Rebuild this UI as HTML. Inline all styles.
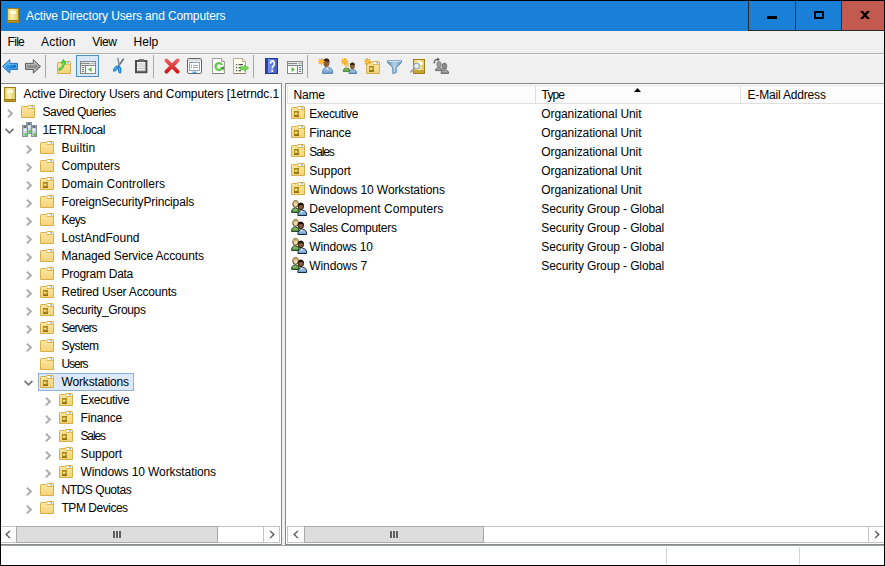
<!DOCTYPE html>
<html><head><meta charset="utf-8"><title>Active Directory Users and Computers</title>
<style>
html,body{margin:0;padding:0;}
body{width:885px;height:566px;position:relative;overflow:hidden;background:#fff;font-family:"Liberation Sans",sans-serif;font-size:12px;color:#000;}
div,span,svg{position:absolute;}
.t{white-space:pre;}
.i{overflow:visible;}
.sep{width:1px;background:#a8a8a8;top:55px;height:23px;}
</style></head><body>


<svg width="0" height="0" style="position:absolute">
<defs>
<linearGradient id="gBook" x1="0" x2="1" y1="0" y2="0"><stop offset="0" stop-color="#e6cf62"/><stop offset=".45" stop-color="#f8efb4"/><stop offset="1" stop-color="#dfc452"/></linearGradient>
<linearGradient id="gFold" x1="0" x2="0" y1="0" y2="1"><stop offset="0" stop-color="#fbe7a2"/><stop offset="1" stop-color="#f4d47c"/></linearGradient>
<linearGradient id="gSrv" x1="0" x2="1" y1="0" y2="0"><stop offset="0" stop-color="#a4b0bc"/><stop offset=".5" stop-color="#dce4ec"/><stop offset="1" stop-color="#a4b0bc"/></linearGradient>
<linearGradient id="gBack" x1="0" x2=".8" y1="0" y2="1"><stop offset="0" stop-color="#8cd4fc"/><stop offset=".35" stop-color="#44acf0"/><stop offset=".7" stop-color="#0c74d4"/><stop offset="1" stop-color="#2c94e4"/></linearGradient>
<linearGradient id="gFwd" x1="0" x2="0" y1="0" y2="1"><stop offset="0" stop-color="#c4c4c4"/><stop offset=".5" stop-color="#8c8c8c"/><stop offset="1" stop-color="#a8a8a8"/></linearGradient>
<linearGradient id="gRed" gradientUnits="userSpaceOnUse" x1="0" x2="0" y1="0" y2="16"><stop offset="0" stop-color="#f46a6a"/><stop offset="1" stop-color="#c80c0c"/></linearGradient>
<linearGradient id="gHelp" x1="0" x2="1" y1="0" y2="0"><stop offset="0" stop-color="#2040a8"/><stop offset=".2" stop-color="#2848b0"/><stop offset=".24" stop-color="#7890e4"/><stop offset="1" stop-color="#3c54bc"/></linearGradient>
<linearGradient id="gFun" x1="0" x2="1" y1="0" y2="0"><stop offset="0" stop-color="#5c90b8"/><stop offset=".5" stop-color="#b8d4e8"/><stop offset="1" stop-color="#5c90b8"/></linearGradient>
<linearGradient id="gBlue" x1="0" x2="0" y1="0" y2="1"><stop offset="0" stop-color="#b4d0ec"/><stop offset="1" stop-color="#6c9ccc"/></linearGradient>
<linearGradient id="gGreen" x1="0" x2="0" y1="0" y2="1"><stop offset="0" stop-color="#a0d080"/><stop offset="1" stop-color="#4c9838"/></linearGradient>
<linearGradient id="gGray" x1="0" x2="0" y1="0" y2="1"><stop offset="0" stop-color="#c8c8c8"/><stop offset="1" stop-color="#787878"/></linearGradient>







</defs>
</svg>

<div style="left:0;top:0;width:885px;height:566px;background:#000"></div>
<div style="left:1px;top:1px;width:883px;height:564px;background:#f0f0f0"></div>
<div style="left:1px;top:1px;width:883px;height:30px;background:#1a80d7"></div>
<svg class="i" style="left:7px;top:8px" width="12" height="15" viewBox="0 0 12 15"><rect x=".5" y=".5" width="11" height="14" fill="url(#gBook)" stroke="#a47c18"/><rect x="1" y="12" width="10" height="2" fill="#bc981c"/><rect x="1" y="12" width="10" height="1" fill="#9c7c10"/><rect x="3" y="3" width="6" height="3" fill="#fffce4"/></svg>
<span class="t " style="left:26px;top:1px;line-height:31px;letter-spacing:-0.128px;color:#fff;top:1px;">Active Directory Users and Computers</span>
<div style="left:748px;top:1px;width:136px;height:30px;background:#2b2b2b"></div>
<div style="left:749px;top:1px;width:46px;height:29px;background:#1a80d7"></div>
<div style="left:796px;top:1px;width:45px;height:29px;background:#1a80d7"></div>
<div style="left:842px;top:1px;width:42px;height:29px;background:#c35a50"></div>
<div style="left:767px;top:16px;width:10px;height:3px;background:#000"></div>
<div style="left:814px;top:11px;width:6px;height:4px;border:2px solid #000"></div>
<svg class="i" style="left:860px;top:11px" width="10" height="8"><path d="M0 0H3L10 8H7ZM7 0H10L3 8H0Z" fill="#000"/></svg>
<span class="t " style="left:7.5px;top:33px;line-height:18px;letter-spacing:-0.681px;">File</span>
<span class="t " style="left:41px;top:33px;line-height:18px;letter-spacing:0.208px;">Action</span>
<span class="t " style="left:92.3px;top:33px;line-height:18px;letter-spacing:-0.432px;">View</span>
<span class="t " style="left:133.6px;top:33px;line-height:18px;letter-spacing:-0.029px;">Help</span>
<div style="left:1px;top:53px;width:883px;height:1px;background:#b2b2b2"></div>
<div style="left:1px;top:54px;width:883px;height:1px;background:#f9f9fc"></div>
<div class="sep" style="left:45px"></div>
<div class="sep" style="left:153px"></div>
<div class="sep" style="left:253px"></div>
<div class="sep" style="left:307px"></div>
<svg class="i" style="left:2px;top:59px" width="16" height="15"><path d="M.5 7.4L7.8.7V4.4H15.5V10.4H7.8V14.1Z" fill="url(#gBack)" stroke="#2272bc" stroke-linejoin="round"/><path d="M2 7.4L6.8 3V5.4H14.5V9.4H6.8V11.8Z" fill="none" stroke="#fff" stroke-opacity=".3"/></svg>
<svg class="i" style="left:25px;top:59px" width="16" height="15"><path d="M15.6 7.4L8.3.7V4.4H.5V10.4H8.3V14.1Z" fill="url(#gFwd)" stroke="#5a5a5a" stroke-linejoin="round"/><path d="M14.1 7.4L9.3 3V5.4H1.5V9.4H9.3V11.8Z" fill="none" stroke="#fff" stroke-opacity=".3"/></svg>
<svg class="i" style="left:57px;top:58px" width="15" height="16"><g transform="translate(0,3)"><path d="M.5 2.3Q.5 1.5 1.3 1.5H6L7.2.5H12.7Q13.5.5 13.5 1.3V12.5H.5Z" fill="url(#gFold)" stroke="#d6ae4c"/><path d="M6.5 3.5H13" stroke="#dcb85a" fill="none"/><rect x="8" y="1.2" width="4.6" height="1.6" fill="#fff"/><rect x="10.4" y="1.2" width="1.6" height="1.2" fill="#5c9ce8"/></g><path d="M2.6 11.4Q6.4 9.4 6.8 4.6" fill="none" stroke="#44c434" stroke-width="2.6" stroke-linecap="round"/><path d="M3.4 5.4L6.4.8L9.8 5.8Z" fill="#44c434"/><path d="M3.2 10.8Q6 9 6.6 4.4" fill="none" stroke="#8ce878" stroke-width=".9"/></svg>
<div style="left:76px;top:55px;width:21px;height:20px;border:1px solid #4a90c8;background:#d9e7f7"></div>
<svg class="i" style="left:80px;top:61px" width="16" height="13"><rect x=".5" y=".5" width="15" height="12" fill="#fff" stroke="#84888c"/><rect x="1" y="1" width="14" height="3" fill="#e8e8e8"/><path d="M1 2.5H10M11.5 2.5H12.5M13.5 2.5H14.5M1 4.5H15M5.5 4.5V12" stroke="#84888c"/><rect x="1" y="5" width="4" height="7" fill="#ececec"/><path d="M2 6.5H4M2 8.5H4M2 10.5H4" stroke="#7c7c7c"/><path d="M11.5 6L8 8.5L11.5 11Z" fill="#5cbc3c"/></svg>
<svg class="i" style="left:112px;top:58px" width="13" height="16"><path d="M11.7.8L5.6 9.4" stroke="#5c6874" stroke-width="1.5" fill="none"/><path d="M5.9.2L7.4 9" stroke="#8490a0" stroke-width="1.6" fill="none"/><ellipse cx="3.7" cy="10.6" rx="1.1" ry="3" transform="rotate(40 3.7 10.6)" fill="#70ccf4" stroke="#1c84d4" stroke-width="1.4"/><ellipse cx="7.6" cy="11.8" rx="1.1" ry="3.1" transform="rotate(-8 7.6 11.8)" fill="#70ccf4" stroke="#1c84d4" stroke-width="1.4"/></svg>
<svg class="i" style="left:135px;top:58px" width="13" height="16"><rect x="1" y="3" width="10.4" height="11.2" fill="#fff" stroke="#4c4c4c" stroke-width="2"/><rect x="3.6" y="1" width="5.2" height="2.4" fill="#707070"/><path d="M2.4 6H10M2.4 8.2H10M2.4 10.4H10M2.4 12.4H10" stroke="#b4b4b4" stroke-width="1"/></svg>
<svg class="i" style="left:164px;top:58px" width="16" height="16"><path d="M2.4 2.4L13.6 13.6M13.6 2.4L2.4 13.6" stroke="url(#gRed)" stroke-width="3.8" stroke-linecap="round"/></svg>
<svg class="i" style="left:187px;top:58px" width="15" height="16"><rect x=".5" y=".5" width="14" height="15" rx="1.4" fill="#fcfcfc" stroke="#646464"/><rect x="1" y="1" width="13" height="2.4" fill="#dcdcdc"/><rect x="2.5" y="4.5" width="10" height="8" fill="#f8fafc" stroke="#9ca4b0"/><path d="M3 4.5H6" stroke="#7c8490"/><path d="M4 7.5H5M4 9.5H5" stroke="#4c8cc8"/><path d="M6 7.5H11M6 9.5H11" stroke="#a0a8b4"/><rect x="5.5" y="13.6" width="4" height="1.6" fill="#4ca4e4"/></svg>
<svg class="i" style="left:212px;top:58px" width="13" height="16"><path d="M.5.5H9.5L12.5 3.5V15.5H.5Z" fill="#fcfcfc" stroke="#a0a0a0"/><path d="M9.5.5V3.5H12.5" fill="#e8e8e8" stroke="#a0a0a0"/><path d="M.5 15.5H12.5" stroke="#808080"/><path d="M10.1 7.2A3.4 3.4 0 1 0 10 10" fill="none" stroke="#60c848" stroke-width="2.2"/><path d="M8.4 9.4L11.6 12.6L12.2 8.2Z" fill="#38a024"/></svg>
<svg class="i" style="left:233px;top:58px" width="16" height="16"><path d="M.5.5H9.5L12.5 3.5V15.5H.5Z" fill="#fcfae8" stroke="#b4ac94"/><path d="M9.5.5V3.5H12.5" fill="#ece8d0" stroke="#b4ac94"/><path d="M3 6.6H4.2M5.6 6.6H10M3 9.6H4.2M5.6 9.6H8M3 12.6H4.2M5.6 12.6H8" stroke="#505050" stroke-width="1.1"/><path d="M7.4 8.8H11.6V7L15.6 10.1L11.6 13.2V11.4H7.4Z" fill="#78dc58" stroke="#48b030" stroke-width=".7"/><path d="M.5 15.5H12.5" stroke="#8c846c"/></svg>
<svg class="i" style="left:265px;top:58px" width="13" height="16"><rect x="0" y="0" width="13" height="16" fill="url(#gHelp)"/><rect x=".5" y=".5" width="12" height="15" fill="none" stroke="#24388c"/><text transform="translate(7.4,13.6) scale(.62,1)" font-family="Liberation Sans,sans-serif" font-size="16.5" font-weight="bold" fill="#fff" text-anchor="middle">?</text></svg>
<svg class="i" style="left:287px;top:61px" width="16" height="13"><rect x=".5" y=".5" width="15" height="12" fill="#fff" stroke="#84888c"/><rect x="1" y="1" width="14" height="3" fill="#e8e8e8"/><path d="M1 2.5H10M11.5 2.5H12.5M13.5 2.5H14.5M1 4.5H15M10.5 4.5V12" stroke="#84888c"/><path d="M12 6.5H14M12 8.5H14M12 10.5H14" stroke="#5c78a8"/><path d="M4.5 6L8 8.5L4.5 11Z" fill="#5cbc3c"/></svg>
<svg class="i" style="left:318px;top:58px" width="15" height="16"><path d="M4.6 15.4Q4.2 9.4 9.6 9.2Q15 9.4 14.6 15.4Z" fill="url(#gBlue)" stroke="#4470a4" stroke-width=".8"/><ellipse cx="8.4" cy="4.8" rx="3" ry="4.2" fill="#8c5c38"/><path d="M5.4 4.4Q5.4 .4 8.8 .4Q11.6 .6 11.4 4.6Q9 2 5.4 4.4Z" fill="#2c2018"/><path d="M8.6 9.4L9.4 12L10.4 9.4Z" fill="#fff"/><path d="M3.5 0V7M0 3.5H7M1 1L6 6M6 1L1 6" stroke="#f8a820" stroke-width="1.2"/><circle cx="3.5" cy="3.5" r="1.6" fill="#fcc040"/></svg>
<svg class="i" style="left:341px;top:58px" width="16" height="16"><path d="M2.2 13.4Q2.2 10 5.6 9.8Q9 10 9 13.4Z" fill="url(#gGreen)" stroke="#3c7c2c" stroke-width=".8"/><ellipse cx="5.8" cy="6.4" rx="2.3" ry="3.2" fill="#e8cc98"/><path d="M8 15.5Q7.8 11.8 11.8 11.6Q15.8 11.8 15.6 15.5Z" fill="url(#gBlue)" stroke="#4470a4" stroke-width=".8"/><ellipse cx="11.4" cy="8" rx="2.4" ry="3.3" fill="#8c5c38"/><path d="M9 7.6Q9 4.6 11.6 4.6Q14 4.8 13.8 7.6Q12 5.8 9 7.6Z" fill="#2c2018"/><path d="M3.5 0V7M0 3.5H7M1 1L6 6M6 1L1 6" stroke="#f8a820" stroke-width="1.2"/><circle cx="3.5" cy="3.5" r="1.6" fill="#fcc040"/></svg>
<svg class="i" style="left:364px;top:58px" width="16" height="16"><g transform="translate(2,3)"><path d="M.5 2.3Q.5 1.5 1.3 1.5H6L7.2.5H12.7Q13.5.5 13.5 1.3V12.5H.5Z" fill="url(#gFold)" stroke="#d6ae4c"/><path d="M6.5 3.5H13" stroke="#dcb85a" fill="none"/><rect x="8" y="1.2" width="4.6" height="1.6" fill="#fff"/><rect x="10.4" y="1.2" width="1.6" height="1.2" fill="#5c9ce8"/><rect x="3" y="5" width="5" height="6" fill="#bc9824"/><rect x="3" y="5" width="5" height="1.2" fill="#a88414"/><rect x="4" y="6.8" width="2.2" height="1.8" fill="#f4e8a4"/><rect x="3" y="9.4" width="5" height="1.6" fill="#94740c"/></g><path d="M3.5 0V7M0 3.5H7M1 1L6 6M6 1L1 6" stroke="#f8a820" stroke-width="1.2"/><circle cx="3.5" cy="3.5" r="1.6" fill="#fcc040"/></svg>
<svg class="i" style="left:387px;top:60px" width="15" height="14"><path d="M.5.8H14.5V2.4L9.2 7.6V12.6L5.8 13.6V7.6L.5 2.4Z" fill="url(#gFun)" stroke="#4c80ac" stroke-width=".9"/><path d="M1 1.4H14" stroke="#d4e8f8"/></svg>
<svg class="i" style="left:410px;top:59px" width="15" height="15"><rect x="3.5" y=".5" width="11" height="14" fill="url(#gBook)" stroke="#a47c18"/><rect x="4" y="11" width="10" height="3" fill="#c8a634"/><rect x="8" y="3" width="5" height="3" fill="#fffce4"/><path d="M4.6 9L.9 12.8" stroke="#9c9c9c" stroke-width="1.7" stroke-linecap="round"/><circle cx="6.6" cy="7" r="2.8" fill="#e4f2fc" stroke="#94a4b4" stroke-width="1.1"/></svg>
<svg class="i" style="left:433px;top:58px" width="16" height="16"><path d="M2.4 12.6Q2.4 9.6 5.8 9.4Q9.2 9.6 9.2 12.6Z" fill="url(#gGray)" stroke="#606060" stroke-width=".8"/><ellipse cx="6" cy="6.4" rx="2.2" ry="3" fill="#9c9c9c" stroke="#686868" stroke-width=".6"/><path d="M8 15.5Q7.8 12 11.8 11.8Q15.8 12 15.6 15.5Z" fill="url(#gGray)" stroke="#606060" stroke-width=".8"/><ellipse cx="11.4" cy="8.2" rx="2.4" ry="3.2" fill="#8c8c8c" stroke="#585858" stroke-width=".6"/><path d="M1.2 5.4Q1 1.4 5.2 1.2" fill="none" stroke="#505050" stroke-width="1.3"/><path d="M4.4 -.4L6.8 1.4L4.4 3.2Z" fill="#505050"/></svg>
<div style="left:1px;top:83px;width:281px;height:462px;background:#828790"></div>
<div style="left:1px;top:84px;width:280px;height:460px;background:#fff;overflow:hidden" id="tree">
<svg class="i" style="left:3px;top:3px" width="12" height="15" viewBox="0 0 12 15"><rect x=".5" y=".5" width="11" height="14" fill="url(#gBook)" stroke="#a47c18"/><rect x="1" y="12" width="10" height="2" fill="#bc981c"/><rect x="1" y="12" width="10" height="1" fill="#9c7c10"/><rect x="3" y="3" width="6" height="3" fill="#fffce4"/></svg><span class="t " style="left:22.5px;top:1px;line-height:18px;letter-spacing:-0.112px;">Active Directory Users and Computers [1etrndc.1</span>
<svg class="i" style="left:6px;top:25px" width="6" height="9" viewBox="0 0 6 9"><path d="M.9.6L4.9 4.5L.9 8.4" fill="none" stroke="#acacac" stroke-width="2"/></svg><svg class="i" style="left:20px;top:21px" width="14" height="13" viewBox="0 0 14 13"><path d="M.5 2.3Q.5 1.5 1.3 1.5H6L7.2.5H12.7Q13.5.5 13.5 1.3V12.5H.5Z" fill="url(#gFold)" stroke="#d6ae4c"/><path d="M6.5 3.5H13" stroke="#dcb85a" fill="none"/><rect x="8" y="1.2" width="4.6" height="1.6" fill="#fff"/><rect x="10.4" y="1.2" width="1.6" height="1.2" fill="#5c9ce8"/></svg><span class="t " style="left:41.5px;top:19px;line-height:18px;letter-spacing:-0.483px;">Saved Queries</span>
<svg class="i" style="left:4px;top:44px" width="9" height="6" viewBox="0 0 9 6"><path d="M.6.9L4.5 4.9L8.4.9" fill="none" stroke="#747474" stroke-width="1.7"/></svg><svg class="i" style="left:21px;top:38px" width="15" height="15" viewBox="0 0 15 15"><g id="srv1"><rect x="4.5" y=".5" width="5" height="11" fill="url(#gSrv)" stroke="#8492a0"/><rect x="5.6" y="1.4" width="2.8" height="1.2" fill="#1c2830"/><rect x="5.4" y="4.2" width="3.2" height="1.6" fill="#eef2f6"/><rect x="6.6" y="8.4" width="2.2" height="2.2" fill="#30d020"/></g><rect x=".5" y="3.5" width="5" height="11" fill="url(#gSrv)" stroke="#8492a0"/><rect x="1.6" y="4.4" width="2.8" height="1.2" fill="#1c2830"/><rect x="1.4" y="7.2" width="3.2" height="1.6" fill="#eef2f6"/><rect x="2.6" y="11.4" width="2.2" height="2.2" fill="#30d020"/><rect x="9.5" y="3.5" width="5" height="11" fill="url(#gSrv)" stroke="#8492a0"/><rect x="10.6" y="4.4" width="2.8" height="1.2" fill="#1c2830"/><rect x="10.4" y="7.2" width="3.2" height="1.6" fill="#eef2f6"/><rect x="11.6" y="11.4" width="2.2" height="2.2" fill="#30d020"/></svg><span class="t " style="left:41.5px;top:37px;line-height:18px;letter-spacing:-0.436px;">1ETRN.local</span>
<svg class="i" style="left:25px;top:61px" width="6" height="9" viewBox="0 0 6 9"><path d="M.9.6L4.9 4.5L.9 8.4" fill="none" stroke="#acacac" stroke-width="2"/></svg><svg class="i" style="left:39px;top:57px" width="14" height="13" viewBox="0 0 14 13"><path d="M.5 2.3Q.5 1.5 1.3 1.5H6L7.2.5H12.7Q13.5.5 13.5 1.3V12.5H.5Z" fill="url(#gFold)" stroke="#d6ae4c"/><path d="M6.5 3.5H13" stroke="#dcb85a" fill="none"/><rect x="8" y="1.2" width="4.6" height="1.6" fill="#fff"/><rect x="10.4" y="1.2" width="1.6" height="1.2" fill="#5c9ce8"/></svg><span class="t " style="left:60.5px;top:55px;line-height:18px;letter-spacing:0.185px;">Builtin</span>
<svg class="i" style="left:25px;top:79px" width="6" height="9" viewBox="0 0 6 9"><path d="M.9.6L4.9 4.5L.9 8.4" fill="none" stroke="#acacac" stroke-width="2"/></svg><svg class="i" style="left:39px;top:75px" width="14" height="13" viewBox="0 0 14 13"><path d="M.5 2.3Q.5 1.5 1.3 1.5H6L7.2.5H12.7Q13.5.5 13.5 1.3V12.5H.5Z" fill="url(#gFold)" stroke="#d6ae4c"/><path d="M6.5 3.5H13" stroke="#dcb85a" fill="none"/><rect x="8" y="1.2" width="4.6" height="1.6" fill="#fff"/><rect x="10.4" y="1.2" width="1.6" height="1.2" fill="#5c9ce8"/></svg><span class="t " style="left:60.5px;top:73px;line-height:18px;letter-spacing:-0.023px;">Computers</span>
<svg class="i" style="left:25px;top:97px" width="6" height="9" viewBox="0 0 6 9"><path d="M.9.6L4.9 4.5L.9 8.4" fill="none" stroke="#acacac" stroke-width="2"/></svg><svg class="i" style="left:39px;top:93px" width="14" height="13" viewBox="0 0 14 13"><path d="M.5 2.3Q.5 1.5 1.3 1.5H6L7.2.5H12.7Q13.5.5 13.5 1.3V12.5H.5Z" fill="url(#gFold)" stroke="#d6ae4c"/><path d="M6.5 3.5H13" stroke="#dcb85a" fill="none"/><rect x="8" y="1.2" width="4.6" height="1.6" fill="#fff"/><rect x="10.4" y="1.2" width="1.6" height="1.2" fill="#5c9ce8"/><rect x="3" y="5" width="5" height="6" fill="#bc9824"/><rect x="3" y="5" width="5" height="1.2" fill="#a88414"/><rect x="4" y="6.8" width="2.2" height="1.8" fill="#f4e8a4"/><rect x="3" y="9.4" width="5" height="1.6" fill="#94740c"/></svg><span class="t " style="left:60.5px;top:91px;line-height:18px;letter-spacing:0.053px;">Domain Controllers</span>
<svg class="i" style="left:25px;top:115px" width="6" height="9" viewBox="0 0 6 9"><path d="M.9.6L4.9 4.5L.9 8.4" fill="none" stroke="#acacac" stroke-width="2"/></svg><svg class="i" style="left:39px;top:111px" width="14" height="13" viewBox="0 0 14 13"><path d="M.5 2.3Q.5 1.5 1.3 1.5H6L7.2.5H12.7Q13.5.5 13.5 1.3V12.5H.5Z" fill="url(#gFold)" stroke="#d6ae4c"/><path d="M6.5 3.5H13" stroke="#dcb85a" fill="none"/><rect x="8" y="1.2" width="4.6" height="1.6" fill="#fff"/><rect x="10.4" y="1.2" width="1.6" height="1.2" fill="#5c9ce8"/></svg><span class="t " style="left:60.5px;top:109px;line-height:18px;letter-spacing:-0.14px;">ForeignSecurityPrincipals</span>
<svg class="i" style="left:25px;top:133px" width="6" height="9" viewBox="0 0 6 9"><path d="M.9.6L4.9 4.5L.9 8.4" fill="none" stroke="#acacac" stroke-width="2"/></svg><svg class="i" style="left:39px;top:129px" width="14" height="13" viewBox="0 0 14 13"><path d="M.5 2.3Q.5 1.5 1.3 1.5H6L7.2.5H12.7Q13.5.5 13.5 1.3V12.5H.5Z" fill="url(#gFold)" stroke="#d6ae4c"/><path d="M6.5 3.5H13" stroke="#dcb85a" fill="none"/><rect x="8" y="1.2" width="4.6" height="1.6" fill="#fff"/><rect x="10.4" y="1.2" width="1.6" height="1.2" fill="#5c9ce8"/></svg><span class="t " style="left:60.5px;top:127px;line-height:18px;letter-spacing:-0.695px;">Keys</span>
<svg class="i" style="left:25px;top:151px" width="6" height="9" viewBox="0 0 6 9"><path d="M.9.6L4.9 4.5L.9 8.4" fill="none" stroke="#acacac" stroke-width="2"/></svg><svg class="i" style="left:39px;top:147px" width="14" height="13" viewBox="0 0 14 13"><path d="M.5 2.3Q.5 1.5 1.3 1.5H6L7.2.5H12.7Q13.5.5 13.5 1.3V12.5H.5Z" fill="url(#gFold)" stroke="#d6ae4c"/><path d="M6.5 3.5H13" stroke="#dcb85a" fill="none"/><rect x="8" y="1.2" width="4.6" height="1.6" fill="#fff"/><rect x="10.4" y="1.2" width="1.6" height="1.2" fill="#5c9ce8"/></svg><span class="t " style="left:60.5px;top:145px;line-height:18px;letter-spacing:-0.006px;">LostAndFound</span>
<svg class="i" style="left:25px;top:169px" width="6" height="9" viewBox="0 0 6 9"><path d="M.9.6L4.9 4.5L.9 8.4" fill="none" stroke="#acacac" stroke-width="2"/></svg><svg class="i" style="left:39px;top:165px" width="14" height="13" viewBox="0 0 14 13"><path d="M.5 2.3Q.5 1.5 1.3 1.5H6L7.2.5H12.7Q13.5.5 13.5 1.3V12.5H.5Z" fill="url(#gFold)" stroke="#d6ae4c"/><path d="M6.5 3.5H13" stroke="#dcb85a" fill="none"/><rect x="8" y="1.2" width="4.6" height="1.6" fill="#fff"/><rect x="10.4" y="1.2" width="1.6" height="1.2" fill="#5c9ce8"/></svg><span class="t " style="left:60.5px;top:163px;line-height:18px;letter-spacing:-0.131px;">Managed Service Accounts</span>
<svg class="i" style="left:25px;top:187px" width="6" height="9" viewBox="0 0 6 9"><path d="M.9.6L4.9 4.5L.9 8.4" fill="none" stroke="#acacac" stroke-width="2"/></svg><svg class="i" style="left:39px;top:183px" width="14" height="13" viewBox="0 0 14 13"><path d="M.5 2.3Q.5 1.5 1.3 1.5H6L7.2.5H12.7Q13.5.5 13.5 1.3V12.5H.5Z" fill="url(#gFold)" stroke="#d6ae4c"/><path d="M6.5 3.5H13" stroke="#dcb85a" fill="none"/><rect x="8" y="1.2" width="4.6" height="1.6" fill="#fff"/><rect x="10.4" y="1.2" width="1.6" height="1.2" fill="#5c9ce8"/></svg><span class="t " style="left:60.5px;top:181px;line-height:18px;letter-spacing:-0.264px;">Program Data</span>
<svg class="i" style="left:25px;top:205px" width="6" height="9" viewBox="0 0 6 9"><path d="M.9.6L4.9 4.5L.9 8.4" fill="none" stroke="#acacac" stroke-width="2"/></svg><svg class="i" style="left:39px;top:201px" width="14" height="13" viewBox="0 0 14 13"><path d="M.5 2.3Q.5 1.5 1.3 1.5H6L7.2.5H12.7Q13.5.5 13.5 1.3V12.5H.5Z" fill="url(#gFold)" stroke="#d6ae4c"/><path d="M6.5 3.5H13" stroke="#dcb85a" fill="none"/><rect x="8" y="1.2" width="4.6" height="1.6" fill="#fff"/><rect x="10.4" y="1.2" width="1.6" height="1.2" fill="#5c9ce8"/><rect x="3" y="5" width="5" height="6" fill="#bc9824"/><rect x="3" y="5" width="5" height="1.2" fill="#a88414"/><rect x="4" y="6.8" width="2.2" height="1.8" fill="#f4e8a4"/><rect x="3" y="9.4" width="5" height="1.6" fill="#94740c"/></svg><span class="t " style="left:60.5px;top:199px;line-height:18px;letter-spacing:-0.205px;">Retired User Accounts</span>
<svg class="i" style="left:25px;top:223px" width="6" height="9" viewBox="0 0 6 9"><path d="M.9.6L4.9 4.5L.9 8.4" fill="none" stroke="#acacac" stroke-width="2"/></svg><svg class="i" style="left:39px;top:219px" width="14" height="13" viewBox="0 0 14 13"><path d="M.5 2.3Q.5 1.5 1.3 1.5H6L7.2.5H12.7Q13.5.5 13.5 1.3V12.5H.5Z" fill="url(#gFold)" stroke="#d6ae4c"/><path d="M6.5 3.5H13" stroke="#dcb85a" fill="none"/><rect x="8" y="1.2" width="4.6" height="1.6" fill="#fff"/><rect x="10.4" y="1.2" width="1.6" height="1.2" fill="#5c9ce8"/><rect x="3" y="5" width="5" height="6" fill="#bc9824"/><rect x="3" y="5" width="5" height="1.2" fill="#a88414"/><rect x="4" y="6.8" width="2.2" height="1.8" fill="#f4e8a4"/><rect x="3" y="9.4" width="5" height="1.6" fill="#94740c"/></svg><span class="t " style="left:60.5px;top:217px;line-height:18px;letter-spacing:-0.355px;">Security_Groups</span>
<svg class="i" style="left:25px;top:241px" width="6" height="9" viewBox="0 0 6 9"><path d="M.9.6L4.9 4.5L.9 8.4" fill="none" stroke="#acacac" stroke-width="2"/></svg><svg class="i" style="left:39px;top:237px" width="14" height="13" viewBox="0 0 14 13"><path d="M.5 2.3Q.5 1.5 1.3 1.5H6L7.2.5H12.7Q13.5.5 13.5 1.3V12.5H.5Z" fill="url(#gFold)" stroke="#d6ae4c"/><path d="M6.5 3.5H13" stroke="#dcb85a" fill="none"/><rect x="8" y="1.2" width="4.6" height="1.6" fill="#fff"/><rect x="10.4" y="1.2" width="1.6" height="1.2" fill="#5c9ce8"/><rect x="3" y="5" width="5" height="6" fill="#bc9824"/><rect x="3" y="5" width="5" height="1.2" fill="#a88414"/><rect x="4" y="6.8" width="2.2" height="1.8" fill="#f4e8a4"/><rect x="3" y="9.4" width="5" height="1.6" fill="#94740c"/></svg><span class="t " style="left:60.5px;top:235px;line-height:18px;letter-spacing:-0.874px;">Servers</span>
<svg class="i" style="left:25px;top:259px" width="6" height="9" viewBox="0 0 6 9"><path d="M.9.6L4.9 4.5L.9 8.4" fill="none" stroke="#acacac" stroke-width="2"/></svg><svg class="i" style="left:39px;top:255px" width="14" height="13" viewBox="0 0 14 13"><path d="M.5 2.3Q.5 1.5 1.3 1.5H6L7.2.5H12.7Q13.5.5 13.5 1.3V12.5H.5Z" fill="url(#gFold)" stroke="#d6ae4c"/><path d="M6.5 3.5H13" stroke="#dcb85a" fill="none"/><rect x="8" y="1.2" width="4.6" height="1.6" fill="#fff"/><rect x="10.4" y="1.2" width="1.6" height="1.2" fill="#5c9ce8"/></svg><span class="t " style="left:60.5px;top:253px;line-height:18px;letter-spacing:-0.523px;">System</span>
<svg class="i" style="left:39px;top:273px" width="14" height="13" viewBox="0 0 14 13"><path d="M.5 2.3Q.5 1.5 1.3 1.5H6L7.2.5H12.7Q13.5.5 13.5 1.3V12.5H.5Z" fill="url(#gFold)" stroke="#d6ae4c"/><path d="M6.5 3.5H13" stroke="#dcb85a" fill="none"/><rect x="8" y="1.2" width="4.6" height="1.6" fill="#fff"/><rect x="10.4" y="1.2" width="1.6" height="1.2" fill="#5c9ce8"/></svg><span class="t " style="left:60.5px;top:271px;line-height:18px;letter-spacing:-1.061px;">Users</span>
<div style="left:37px;top:289px;width:94px;height:16px;border:1px solid #8eb0dc;background:#dde9f8"></div><svg class="i" style="left:23px;top:296px" width="9" height="6" viewBox="0 0 9 6"><path d="M.6.9L4.5 4.9L8.4.9" fill="none" stroke="#747474" stroke-width="1.7"/></svg><svg class="i" style="left:39px;top:291px" width="14" height="13" viewBox="0 0 14 13"><path d="M.5 2.3Q.5 1.5 1.3 1.5H6L7.2.5H12.7Q13.5.5 13.5 1.3V12.5H.5Z" fill="url(#gFold)" stroke="#d6ae4c"/><path d="M6.5 3.5H13" stroke="#dcb85a" fill="none"/><rect x="8" y="1.2" width="4.6" height="1.6" fill="#fff"/><rect x="10.4" y="1.2" width="1.6" height="1.2" fill="#5c9ce8"/><rect x="3" y="5" width="5" height="6" fill="#bc9824"/><rect x="3" y="5" width="5" height="1.2" fill="#a88414"/><rect x="4" y="6.8" width="2.2" height="1.8" fill="#f4e8a4"/><rect x="3" y="9.4" width="5" height="1.6" fill="#94740c"/></svg><span class="t " style="left:60.5px;top:289px;line-height:18px;letter-spacing:-0.14px;">Workstations</span>
<svg class="i" style="left:44px;top:313px" width="6" height="9" viewBox="0 0 6 9"><path d="M.9.6L4.9 4.5L.9 8.4" fill="none" stroke="#acacac" stroke-width="2"/></svg><svg class="i" style="left:58px;top:309px" width="14" height="13" viewBox="0 0 14 13"><path d="M.5 2.3Q.5 1.5 1.3 1.5H6L7.2.5H12.7Q13.5.5 13.5 1.3V12.5H.5Z" fill="url(#gFold)" stroke="#d6ae4c"/><path d="M6.5 3.5H13" stroke="#dcb85a" fill="none"/><rect x="8" y="1.2" width="4.6" height="1.6" fill="#fff"/><rect x="10.4" y="1.2" width="1.6" height="1.2" fill="#5c9ce8"/><rect x="3" y="5" width="5" height="6" fill="#bc9824"/><rect x="3" y="5" width="5" height="1.2" fill="#a88414"/><rect x="4" y="6.8" width="2.2" height="1.8" fill="#f4e8a4"/><rect x="3" y="9.4" width="5" height="1.6" fill="#94740c"/></svg><span class="t " style="left:79.5px;top:307px;line-height:18px;letter-spacing:-0.366px;">Executive</span>
<svg class="i" style="left:44px;top:331px" width="6" height="9" viewBox="0 0 6 9"><path d="M.9.6L4.9 4.5L.9 8.4" fill="none" stroke="#acacac" stroke-width="2"/></svg><svg class="i" style="left:58px;top:327px" width="14" height="13" viewBox="0 0 14 13"><path d="M.5 2.3Q.5 1.5 1.3 1.5H6L7.2.5H12.7Q13.5.5 13.5 1.3V12.5H.5Z" fill="url(#gFold)" stroke="#d6ae4c"/><path d="M6.5 3.5H13" stroke="#dcb85a" fill="none"/><rect x="8" y="1.2" width="4.6" height="1.6" fill="#fff"/><rect x="10.4" y="1.2" width="1.6" height="1.2" fill="#5c9ce8"/><rect x="3" y="5" width="5" height="6" fill="#bc9824"/><rect x="3" y="5" width="5" height="1.2" fill="#a88414"/><rect x="4" y="6.8" width="2.2" height="1.8" fill="#f4e8a4"/><rect x="3" y="9.4" width="5" height="1.6" fill="#94740c"/></svg><span class="t " style="left:79.5px;top:325px;line-height:18px;letter-spacing:-0.151px;">Finance</span>
<svg class="i" style="left:44px;top:349px" width="6" height="9" viewBox="0 0 6 9"><path d="M.9.6L4.9 4.5L.9 8.4" fill="none" stroke="#acacac" stroke-width="2"/></svg><svg class="i" style="left:58px;top:345px" width="14" height="13" viewBox="0 0 14 13"><path d="M.5 2.3Q.5 1.5 1.3 1.5H6L7.2.5H12.7Q13.5.5 13.5 1.3V12.5H.5Z" fill="url(#gFold)" stroke="#d6ae4c"/><path d="M6.5 3.5H13" stroke="#dcb85a" fill="none"/><rect x="8" y="1.2" width="4.6" height="1.6" fill="#fff"/><rect x="10.4" y="1.2" width="1.6" height="1.2" fill="#5c9ce8"/><rect x="3" y="5" width="5" height="6" fill="#bc9824"/><rect x="3" y="5" width="5" height="1.2" fill="#a88414"/><rect x="4" y="6.8" width="2.2" height="1.8" fill="#f4e8a4"/><rect x="3" y="9.4" width="5" height="1.6" fill="#94740c"/></svg><span class="t " style="left:79.5px;top:343px;line-height:18px;letter-spacing:-1.133px;">Sales</span>
<svg class="i" style="left:44px;top:367px" width="6" height="9" viewBox="0 0 6 9"><path d="M.9.6L4.9 4.5L.9 8.4" fill="none" stroke="#acacac" stroke-width="2"/></svg><svg class="i" style="left:58px;top:363px" width="14" height="13" viewBox="0 0 14 13"><path d="M.5 2.3Q.5 1.5 1.3 1.5H6L7.2.5H12.7Q13.5.5 13.5 1.3V12.5H.5Z" fill="url(#gFold)" stroke="#d6ae4c"/><path d="M6.5 3.5H13" stroke="#dcb85a" fill="none"/><rect x="8" y="1.2" width="4.6" height="1.6" fill="#fff"/><rect x="10.4" y="1.2" width="1.6" height="1.2" fill="#5c9ce8"/><rect x="3" y="5" width="5" height="6" fill="#bc9824"/><rect x="3" y="5" width="5" height="1.2" fill="#a88414"/><rect x="4" y="6.8" width="2.2" height="1.8" fill="#f4e8a4"/><rect x="3" y="9.4" width="5" height="1.6" fill="#94740c"/></svg><span class="t " style="left:79.5px;top:361px;line-height:18px;letter-spacing:-0.072px;">Support</span>
<svg class="i" style="left:44px;top:385px" width="6" height="9" viewBox="0 0 6 9"><path d="M.9.6L4.9 4.5L.9 8.4" fill="none" stroke="#acacac" stroke-width="2"/></svg><svg class="i" style="left:58px;top:381px" width="14" height="13" viewBox="0 0 14 13"><path d="M.5 2.3Q.5 1.5 1.3 1.5H6L7.2.5H12.7Q13.5.5 13.5 1.3V12.5H.5Z" fill="url(#gFold)" stroke="#d6ae4c"/><path d="M6.5 3.5H13" stroke="#dcb85a" fill="none"/><rect x="8" y="1.2" width="4.6" height="1.6" fill="#fff"/><rect x="10.4" y="1.2" width="1.6" height="1.2" fill="#5c9ce8"/><rect x="3" y="5" width="5" height="6" fill="#bc9824"/><rect x="3" y="5" width="5" height="1.2" fill="#a88414"/><rect x="4" y="6.8" width="2.2" height="1.8" fill="#f4e8a4"/><rect x="3" y="9.4" width="5" height="1.6" fill="#94740c"/></svg><span class="t " style="left:79.5px;top:379px;line-height:18px;letter-spacing:-0.102px;">Windows 10 Workstations</span>
<svg class="i" style="left:25px;top:403px" width="6" height="9" viewBox="0 0 6 9"><path d="M.9.6L4.9 4.5L.9 8.4" fill="none" stroke="#acacac" stroke-width="2"/></svg><svg class="i" style="left:39px;top:399px" width="14" height="13" viewBox="0 0 14 13"><path d="M.5 2.3Q.5 1.5 1.3 1.5H6L7.2.5H12.7Q13.5.5 13.5 1.3V12.5H.5Z" fill="url(#gFold)" stroke="#d6ae4c"/><path d="M6.5 3.5H13" stroke="#dcb85a" fill="none"/><rect x="8" y="1.2" width="4.6" height="1.6" fill="#fff"/><rect x="10.4" y="1.2" width="1.6" height="1.2" fill="#5c9ce8"/></svg><span class="t " style="left:60.5px;top:397px;line-height:18px;letter-spacing:-0.45px;">NTDS Quotas</span>
<svg class="i" style="left:25px;top:421px" width="6" height="9" viewBox="0 0 6 9"><path d="M.9.6L4.9 4.5L.9 8.4" fill="none" stroke="#acacac" stroke-width="2"/></svg><svg class="i" style="left:39px;top:417px" width="14" height="13" viewBox="0 0 14 13"><path d="M.5 2.3Q.5 1.5 1.3 1.5H6L7.2.5H12.7Q13.5.5 13.5 1.3V12.5H.5Z" fill="url(#gFold)" stroke="#d6ae4c"/><path d="M6.5 3.5H13" stroke="#dcb85a" fill="none"/><rect x="8" y="1.2" width="4.6" height="1.6" fill="#fff"/><rect x="10.4" y="1.2" width="1.6" height="1.2" fill="#5c9ce8"/></svg><span class="t " style="left:60.5px;top:415px;line-height:18px;letter-spacing:-0.474px;">TPM Devices</span>
<div style="left:-2px;top:442px;width:279px;height:15px;border:1px solid #c4c4c4;background:#fff"></div><div style="left:262px;top:442px;width:1px;height:17px;background:#c4c4c4"></div><div style="left:15px;top:442px;width:200px;height:15px;border:1px solid #a8a8a8;background:#dddddd"></div><div style="left:112px;top:447px;width:2px;height:7px;background:#606060"></div><div style="left:115px;top:447px;width:2px;height:7px;background:#606060"></div><div style="left:118px;top:447px;width:2px;height:7px;background:#606060"></div><svg class="i" style="left:3.5999999999999996px;top:446px" width="6" height="9"><path d="M5 .9L1.2 4.5L5 8.1" fill="none" stroke="#505050" stroke-width="1.3"/></svg><svg class="i" style="left:267.6px;top:446px" width="6" height="9"><path d="M1 .9L4.8 4.5L1 8.1" fill="none" stroke="#505050" stroke-width="1.3"/></svg>
</div>
<div style="left:285px;top:83px;width:600px;height:462px;background:#828790"></div>
<div style="left:286px;top:84px;width:599px;height:460px;background:#fff;overflow:hidden" id="list">
<div style="left:1px;top:1px;width:599px;height:17px;background:#fcfcfc;border-top:1px solid #e5e5e5;border-bottom:1px solid #e0e0e0;border-left:1px solid #e5e5e5"></div>
<div style="left:249px;top:2px;width:1px;height:17px;background:#e0e0e0"></div>
<div style="left:454px;top:2px;width:1px;height:17px;background:#e0e0e0"></div>
<span class="t " style="left:7.5px;top:2px;line-height:19px;letter-spacing:-0.173px;">Name</span>
<span class="t " style="left:255.6px;top:2px;line-height:19px;letter-spacing:-0.874px;">Type</span>
<span class="t " style="left:461.5px;top:2px;line-height:19px;letter-spacing:-0.177px;">E-Mail Address</span>
<svg class="i" style="left:348px;top:4px" width="7" height="4"><path d="M0 4L3.5 0L7 4Z" fill="#000"/></svg>
<svg class="i" style="left:5px;top:22px" width="14" height="13" viewBox="0 0 14 13"><path d="M.5 2.3Q.5 1.5 1.3 1.5H6L7.2.5H12.7Q13.5.5 13.5 1.3V12.5H.5Z" fill="url(#gFold)" stroke="#d6ae4c"/><path d="M6.5 3.5H13" stroke="#dcb85a" fill="none"/><rect x="8" y="1.2" width="4.6" height="1.6" fill="#fff"/><rect x="10.4" y="1.2" width="1.6" height="1.2" fill="#5c9ce8"/><rect x="3" y="5" width="5" height="6" fill="#bc9824"/><rect x="3" y="5" width="5" height="1.2" fill="#a88414"/><rect x="4" y="6.8" width="2.2" height="1.8" fill="#f4e8a4"/><rect x="3" y="9.4" width="5" height="1.6" fill="#94740c"/></svg>
<span class="t " style="left:23.3px;top:21px;line-height:19px;letter-spacing:-0.366px;">Executive</span>
<span class="t " style="left:255.3px;top:21px;line-height:19px;letter-spacing:-0.103px;">Organizational Unit</span>
<svg class="i" style="left:5px;top:41px" width="14" height="13" viewBox="0 0 14 13"><path d="M.5 2.3Q.5 1.5 1.3 1.5H6L7.2.5H12.7Q13.5.5 13.5 1.3V12.5H.5Z" fill="url(#gFold)" stroke="#d6ae4c"/><path d="M6.5 3.5H13" stroke="#dcb85a" fill="none"/><rect x="8" y="1.2" width="4.6" height="1.6" fill="#fff"/><rect x="10.4" y="1.2" width="1.6" height="1.2" fill="#5c9ce8"/><rect x="3" y="5" width="5" height="6" fill="#bc9824"/><rect x="3" y="5" width="5" height="1.2" fill="#a88414"/><rect x="4" y="6.8" width="2.2" height="1.8" fill="#f4e8a4"/><rect x="3" y="9.4" width="5" height="1.6" fill="#94740c"/></svg>
<span class="t " style="left:23.3px;top:40px;line-height:19px;letter-spacing:-0.151px;">Finance</span>
<span class="t " style="left:255.3px;top:40px;line-height:19px;letter-spacing:-0.103px;">Organizational Unit</span>
<svg class="i" style="left:5px;top:60px" width="14" height="13" viewBox="0 0 14 13"><path d="M.5 2.3Q.5 1.5 1.3 1.5H6L7.2.5H12.7Q13.5.5 13.5 1.3V12.5H.5Z" fill="url(#gFold)" stroke="#d6ae4c"/><path d="M6.5 3.5H13" stroke="#dcb85a" fill="none"/><rect x="8" y="1.2" width="4.6" height="1.6" fill="#fff"/><rect x="10.4" y="1.2" width="1.6" height="1.2" fill="#5c9ce8"/><rect x="3" y="5" width="5" height="6" fill="#bc9824"/><rect x="3" y="5" width="5" height="1.2" fill="#a88414"/><rect x="4" y="6.8" width="2.2" height="1.8" fill="#f4e8a4"/><rect x="3" y="9.4" width="5" height="1.6" fill="#94740c"/></svg>
<span class="t " style="left:23.3px;top:59px;line-height:19px;letter-spacing:-1.133px;">Sales</span>
<span class="t " style="left:255.3px;top:59px;line-height:19px;letter-spacing:-0.103px;">Organizational Unit</span>
<svg class="i" style="left:5px;top:79px" width="14" height="13" viewBox="0 0 14 13"><path d="M.5 2.3Q.5 1.5 1.3 1.5H6L7.2.5H12.7Q13.5.5 13.5 1.3V12.5H.5Z" fill="url(#gFold)" stroke="#d6ae4c"/><path d="M6.5 3.5H13" stroke="#dcb85a" fill="none"/><rect x="8" y="1.2" width="4.6" height="1.6" fill="#fff"/><rect x="10.4" y="1.2" width="1.6" height="1.2" fill="#5c9ce8"/><rect x="3" y="5" width="5" height="6" fill="#bc9824"/><rect x="3" y="5" width="5" height="1.2" fill="#a88414"/><rect x="4" y="6.8" width="2.2" height="1.8" fill="#f4e8a4"/><rect x="3" y="9.4" width="5" height="1.6" fill="#94740c"/></svg>
<span class="t " style="left:23.3px;top:78px;line-height:19px;letter-spacing:-0.072px;">Support</span>
<span class="t " style="left:255.3px;top:78px;line-height:19px;letter-spacing:-0.103px;">Organizational Unit</span>
<svg class="i" style="left:5px;top:98px" width="14" height="13" viewBox="0 0 14 13"><path d="M.5 2.3Q.5 1.5 1.3 1.5H6L7.2.5H12.7Q13.5.5 13.5 1.3V12.5H.5Z" fill="url(#gFold)" stroke="#d6ae4c"/><path d="M6.5 3.5H13" stroke="#dcb85a" fill="none"/><rect x="8" y="1.2" width="4.6" height="1.6" fill="#fff"/><rect x="10.4" y="1.2" width="1.6" height="1.2" fill="#5c9ce8"/><rect x="3" y="5" width="5" height="6" fill="#bc9824"/><rect x="3" y="5" width="5" height="1.2" fill="#a88414"/><rect x="4" y="6.8" width="2.2" height="1.8" fill="#f4e8a4"/><rect x="3" y="9.4" width="5" height="1.6" fill="#94740c"/></svg>
<span class="t " style="left:23.3px;top:97px;line-height:19px;letter-spacing:-0.102px;">Windows 10 Workstations</span>
<span class="t " style="left:255.3px;top:97px;line-height:19px;letter-spacing:-0.103px;">Organizational Unit</span>
<svg class="i" style="left:5px;top:116px" width="16" height="16" viewBox="0 0 16 16"><path d="M.6 12.4Q.4 8.2 4.4 7.8Q8.4 8.2 8.4 12.4Z" fill="url(#gGreen)" stroke="#1c3814" stroke-width="1"/><ellipse cx="4.6" cy="3.9" rx="2.8" ry="3.4" fill="#f0d8a8" stroke="#4c3c20" stroke-width="1"/><path d="M1.9 3.4Q2.2 .5 4.8 .6Q7.2 .8 7.3 3.2Q5 1.8 1.9 3.4Z" fill="#c8a850"/><path d="M6.9 15.5Q6.6 10.6 11.4 10.2Q16 10.6 15.6 15.5Z" fill="url(#gBlue)" stroke="#14283c" stroke-width="1"/><ellipse cx="9.9" cy="6.4" rx="2.6" ry="3.3" fill="#8c5c34" stroke="#1c1008" stroke-width="1"/><path d="M7.3 5.8Q7.2 2.8 10 2.8Q12.8 3 12.6 6Q10.6 4.2 7.3 5.8Z" fill="#1c1008"/><path d="M9.6 10.6L10.6 13L11.6 10.6Z" fill="#fff"/></svg>
<span class="t " style="left:23.3px;top:116px;line-height:19px;letter-spacing:0.063px;">Development Computers</span>
<span class="t " style="left:255.3px;top:116px;line-height:19px;letter-spacing:-0.109px;">Security Group - Global</span>
<svg class="i" style="left:5px;top:135px" width="16" height="16" viewBox="0 0 16 16"><path d="M.6 12.4Q.4 8.2 4.4 7.8Q8.4 8.2 8.4 12.4Z" fill="url(#gGreen)" stroke="#1c3814" stroke-width="1"/><ellipse cx="4.6" cy="3.9" rx="2.8" ry="3.4" fill="#f0d8a8" stroke="#4c3c20" stroke-width="1"/><path d="M1.9 3.4Q2.2 .5 4.8 .6Q7.2 .8 7.3 3.2Q5 1.8 1.9 3.4Z" fill="#c8a850"/><path d="M6.9 15.5Q6.6 10.6 11.4 10.2Q16 10.6 15.6 15.5Z" fill="url(#gBlue)" stroke="#14283c" stroke-width="1"/><ellipse cx="9.9" cy="6.4" rx="2.6" ry="3.3" fill="#8c5c34" stroke="#1c1008" stroke-width="1"/><path d="M7.3 5.8Q7.2 2.8 10 2.8Q12.8 3 12.6 6Q10.6 4.2 7.3 5.8Z" fill="#1c1008"/><path d="M9.6 10.6L10.6 13L11.6 10.6Z" fill="#fff"/></svg>
<span class="t " style="left:23.3px;top:135px;line-height:19px;letter-spacing:-0.318px;">Sales Computers</span>
<span class="t " style="left:255.3px;top:135px;line-height:19px;letter-spacing:-0.109px;">Security Group - Global</span>
<svg class="i" style="left:5px;top:154px" width="16" height="16" viewBox="0 0 16 16"><path d="M.6 12.4Q.4 8.2 4.4 7.8Q8.4 8.2 8.4 12.4Z" fill="url(#gGreen)" stroke="#1c3814" stroke-width="1"/><ellipse cx="4.6" cy="3.9" rx="2.8" ry="3.4" fill="#f0d8a8" stroke="#4c3c20" stroke-width="1"/><path d="M1.9 3.4Q2.2 .5 4.8 .6Q7.2 .8 7.3 3.2Q5 1.8 1.9 3.4Z" fill="#c8a850"/><path d="M6.9 15.5Q6.6 10.6 11.4 10.2Q16 10.6 15.6 15.5Z" fill="url(#gBlue)" stroke="#14283c" stroke-width="1"/><ellipse cx="9.9" cy="6.4" rx="2.6" ry="3.3" fill="#8c5c34" stroke="#1c1008" stroke-width="1"/><path d="M7.3 5.8Q7.2 2.8 10 2.8Q12.8 3 12.6 6Q10.6 4.2 7.3 5.8Z" fill="#1c1008"/><path d="M9.6 10.6L10.6 13L11.6 10.6Z" fill="#fff"/></svg>
<span class="t " style="left:23.3px;top:154px;line-height:19px;letter-spacing:-0.186px;">Windows 10</span>
<span class="t " style="left:255.3px;top:154px;line-height:19px;letter-spacing:-0.109px;">Security Group - Global</span>
<svg class="i" style="left:5px;top:173px" width="16" height="16" viewBox="0 0 16 16"><path d="M.6 12.4Q.4 8.2 4.4 7.8Q8.4 8.2 8.4 12.4Z" fill="url(#gGreen)" stroke="#1c3814" stroke-width="1"/><ellipse cx="4.6" cy="3.9" rx="2.8" ry="3.4" fill="#f0d8a8" stroke="#4c3c20" stroke-width="1"/><path d="M1.9 3.4Q2.2 .5 4.8 .6Q7.2 .8 7.3 3.2Q5 1.8 1.9 3.4Z" fill="#c8a850"/><path d="M6.9 15.5Q6.6 10.6 11.4 10.2Q16 10.6 15.6 15.5Z" fill="url(#gBlue)" stroke="#14283c" stroke-width="1"/><ellipse cx="9.9" cy="6.4" rx="2.6" ry="3.3" fill="#8c5c34" stroke="#1c1008" stroke-width="1"/><path d="M7.3 5.8Q7.2 2.8 10 2.8Q12.8 3 12.6 6Q10.6 4.2 7.3 5.8Z" fill="#1c1008"/><path d="M9.6 10.6L10.6 13L11.6 10.6Z" fill="#fff"/></svg>
<span class="t " style="left:23.3px;top:173px;line-height:19px;letter-spacing:-0.098px;">Windows 7</span>
<span class="t " style="left:255.3px;top:173px;line-height:19px;letter-spacing:-0.109px;">Security Group - Global</span>
<div style="left:1px;top:442px;width:596px;height:15px;border:1px solid #c4c4c4;background:#fff"></div><div style="left:582px;top:442px;width:1px;height:17px;background:#c4c4c4"></div><div style="left:18px;top:442px;width:178px;height:15px;border:1px solid #a8a8a8;background:#dddddd"></div><div style="left:104px;top:447px;width:2px;height:7px;background:#606060"></div><div style="left:107px;top:447px;width:2px;height:7px;background:#606060"></div><div style="left:110px;top:447px;width:2px;height:7px;background:#606060"></div><svg class="i" style="left:6.6px;top:446px" width="6" height="9"><path d="M5 .9L1.2 4.5L5 8.1" fill="none" stroke="#505050" stroke-width="1.3"/></svg><svg class="i" style="left:587.6px;top:446px" width="6" height="9"><path d="M1 .9L4.8 4.5L1 8.1" fill="none" stroke="#505050" stroke-width="1.3"/></svg>
</div>
<div style="left:1px;top:545px;width:883px;height:20px;background:#fff"></div>
<div style="left:1px;top:545px;width:883px;height:1px;background:#a4a4a4"></div>
<div style="left:282px;top:544px;width:3px;height:1px;background:#fff"></div>
<div style="left:666px;top:547px;width:1px;height:18px;background:#d4d4d4"></div>
<div style="left:799px;top:547px;width:1px;height:18px;background:#d4d4d4"></div>
<div style="left:0;top:0;width:885px;height:1px;background:#000"></div><div style="left:0;top:565px;width:885px;height:1px;background:#000"></div><div style="left:0;top:0;width:1px;height:566px;background:#000"></div><div style="left:884px;top:0;width:1px;height:566px;background:#000"></div>
</body></html>
